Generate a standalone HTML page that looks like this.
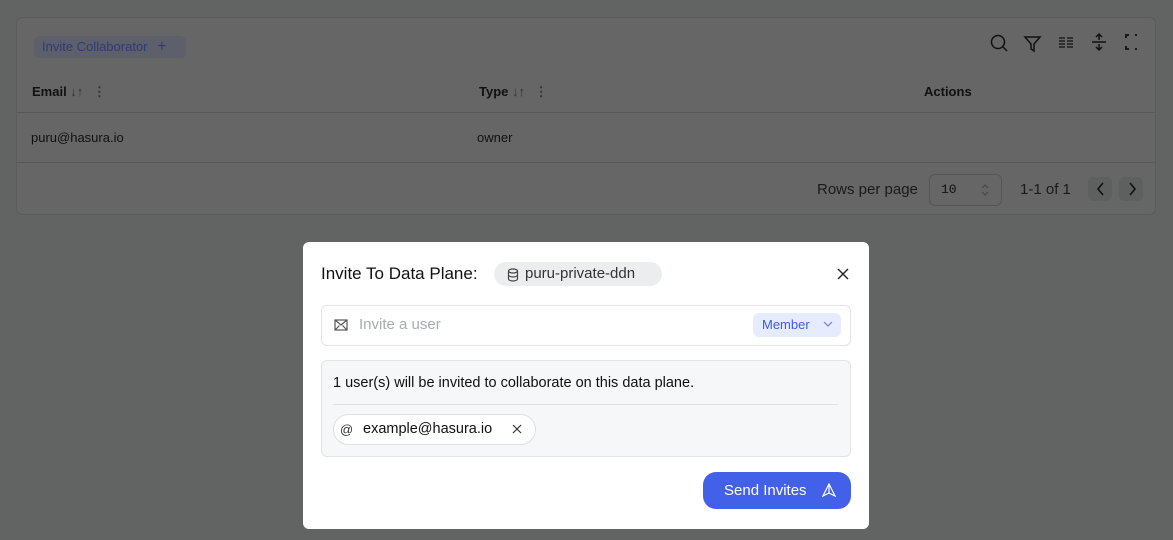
<!DOCTYPE html>
<html><head><style>
*{box-sizing:border-box;margin:0;padding:0}
body{width:1173px;height:540px;background:#626363;font-family:"Liberation Sans",sans-serif;position:relative;overflow:hidden;color:#111}
.abs{position:absolute}
.card{left:16px;top:17px;width:1140px;height:198px;background:#666;border:1px solid #5b5b5b;border-radius:6px}
.hline{height:1px;background:#575757;left:0;right:0}
.modal{left:303px;top:242px;width:566px;height:287px;background:#fff;border-radius:6px}
</style></head><body>
<div class="abs card">
  <div class="abs" style="left:17px;top:18px;width:152px;height:22px;background:#5d5f6a;border-radius:6px;color:#2f3a78;font-size:13px;line-height:22px;padding-left:8px">Invite Collaborator <span style="margin-left:6px;font-size:16px">+</span></div>
  <div class="abs" style="left:15px;top:66px;font-size:13px;font-weight:bold">Email <span style="font-weight:normal;color:#333">↓↑</span> <span style="color:#333;margin-left:6px">⋮</span></div>
  <div class="abs" style="left:462px;top:66px;font-size:13px;font-weight:bold">Type <span style="font-weight:normal;color:#333">↓↑</span> <span style="color:#333;margin-left:6px">⋮</span></div>
  <div class="abs" style="left:907px;top:66px;font-size:13px;font-weight:bold">Actions</div>
  <div class="abs hline" style="top:94px"></div>
  <div class="abs" style="left:14px;top:112px;font-size:13px">puru@hasura.io</div>
  <div class="abs" style="left:460px;top:112px;font-size:13px">owner</div>
  <div class="abs hline" style="top:144px"></div>
  <div class="abs" style="left:800px;top:163px;font-size:15px;color:#1a1a1a">Rows per page</div>
  <div class="abs" style="left:912px;top:156px;width:73px;height:32px;border:1px solid #555;border-radius:6px;font-family:'Liberation Mono',monospace;font-size:13px;line-height:30px;padding-left:11px">10</div>
  <svg class="abs" style="left:964px;top:165px" width="8" height="14" fill="none" stroke="#444" stroke-width="1"><path d="M1 5l3-3 3 3M1 9l3 3 3-3"/></svg>
  <div class="abs" style="left:1003px;top:163px;font-size:15px;color:#1a1a1a">1-1 of 1</div>
  <div class="abs" style="left:1071px;top:159px;width:24px;height:24px;background:#5e5f5f;border-radius:5px"></div>
  <div class="abs" style="left:1102px;top:159px;width:24px;height:24px;background:#5e5f5f;border-radius:5px"></div>
  <svg class="abs" style="left:1071px;top:159px" width="56" height="24" fill="none" stroke="#111" stroke-width="1.6"><path d="M15 6l-5 6 5 6"/><path d="M42 6l5 6-5 6"/></svg>
  <svg class="abs" style="left:970px;top:12px" width="150" height="26" fill="none" stroke="#111" stroke-width="1.5">
    <circle cx="11" cy="12" r="6.5"/><path d="M16 17l4 4"/>
    <path d="M38 7h15l-6 7v7l-3-2v-5z"/>
    <path d="M72 8h6M72 11h6M72 14h6M72 17h6M80 8h6M80 11h6M80 14h6M80 17h6" stroke-width="1.2"/>
    <path d="M105 12h14M112 4v6M109 7l3-3 3 3M112 20v-6M109 17l3 3 3-3"/>
    <path d="M139 8v-3h3M148 5h3v3M151 16v3h-3M142 19h-3v-3" stroke-width="1.8"/>
  </svg>
</div>
<div class="abs modal">
  <div class="abs" style="left:18px;top:22px;font-size:17px;color:#111">Invite To Data Plane:</div>
  <div class="abs" style="left:191px;top:20px;width:168px;height:24px;background:#ebedef;border-radius:12px;font-size:15px;color:#333;line-height:23px;padding-left:31px">puru-private-ddn</div>
  <svg class="abs" style="left:204px;top:26px" width="12" height="14" fill="none" stroke="#444" stroke-width="1.2"><ellipse cx="6" cy="3" rx="4.5" ry="2"/><path d="M1.5 3v8c0 1 2 2 4.5 2s4.5-1 4.5-2V3M1.5 7c0 1 2 2 4.5 2s4.5-1 4.5-2"/></svg>
  <svg class="abs" style="left:533px;top:25px" width="14" height="14" stroke="#222" stroke-width="1.4"><path d="M2 2l10 10M12 2L2 12"/></svg>
  <div class="abs" style="left:18px;top:63px;width:530px;height:41px;border:1px solid #e2e4e8;border-radius:6px"></div>
  <svg class="abs" style="left:31px;top:77px" width="14" height="12" fill="none" stroke="#555" stroke-width="1.2"><rect x="1" y="1" width="12" height="10"/><path d="M1 1l6 5 6-5M1 11l4.5-4.5M13 11l-4.5-4.5"/></svg>
  <div class="abs" style="left:56px;top:74px;font-size:15px;color:#a7abb2">Invite a user</div>
  <div class="abs" style="left:450px;top:71px;width:88px;height:24px;background:#e6ebfd;border-radius:6px;color:#3f5be6;font-size:13px;line-height:24px;padding-left:9px">Member</div>
  <svg class="abs" style="left:520px;top:79px" width="10" height="7" fill="none" stroke="#6a7be8" stroke-width="1.1"><path d="M1 1l4 4 4-4"/></svg>
  <div class="abs" style="left:18px;top:118px;width:530px;height:97px;background:#f6f7f9;border:1px solid #e2e4e8;border-radius:6px"></div>
  <div class="abs" style="left:30px;top:133px;font-size:14.5px;color:#111">1 user(s) will be invited to collaborate on this data plane.</div>
  <div class="abs" style="left:30px;top:162px;width:505px;height:1px;background:#dfe1e5"></div>
  <div class="abs" style="left:30px;top:172px;width:203px;height:31px;background:#fff;border:1px solid #dcdfe3;border-radius:16px;font-size:14.5px;line-height:29px;padding-left:29px;color:#111">example@hasura.io</div>
  <div class="abs" style="left:37px;top:180px;font-size:13px;color:#333">@</div>
  <svg class="abs" style="left:209px;top:182px" width="10" height="10" stroke="#333" stroke-width="1.2"><path d="M1 1l8 8M9 1L1 9"/></svg>
  <div class="abs" style="left:400px;top:230px;width:148px;height:37px;background:#4360e8;border-radius:13px;color:#fff;font-size:15px;line-height:37px;padding-left:21px">Send Invites</div>
  <svg class="abs" style="left:519px;top:241px" width="14" height="14" fill="none" stroke="#fff" stroke-width="1.2"><path d="M7 1l6 12-6-3-6 3z"/><path d="M7 1v9"/></svg>
</div>
</body></html>
